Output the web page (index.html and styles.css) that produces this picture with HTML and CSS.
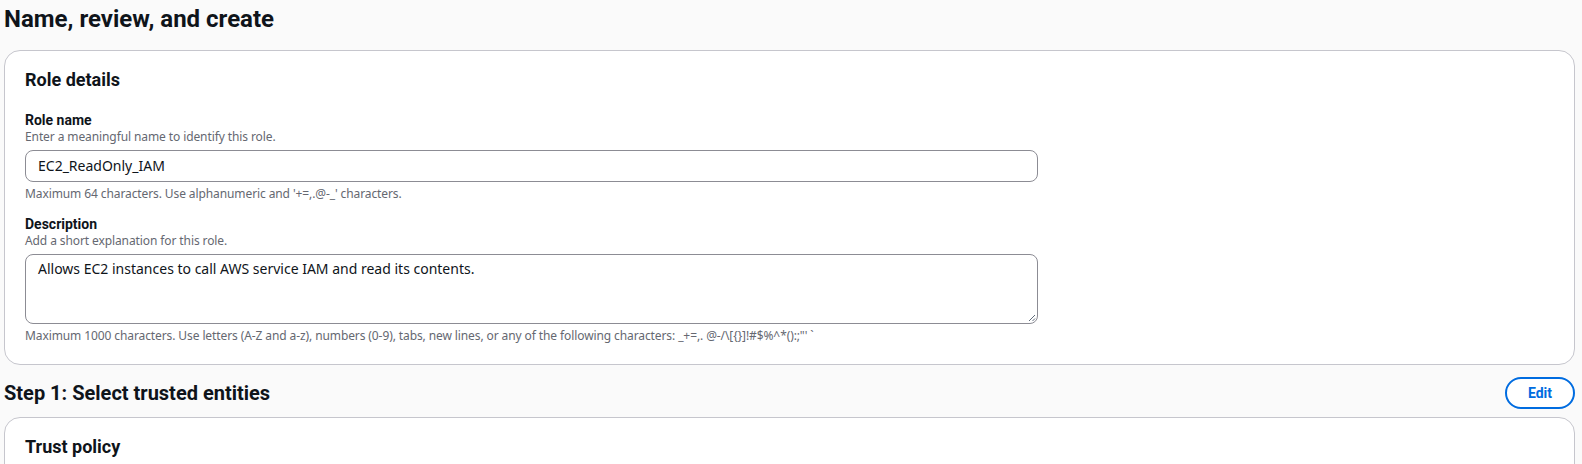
FILE: index.html
```html
<!DOCTYPE html>
<html>
<head>
<meta charset="utf-8">
<link rel="stylesheet" href="styles.css">
</head>
<body>
<div class="page">
  <h1 class="page-title">Name, review, and create</h1>
  <section class="card">
    <h2 class="card-title">Role details</h2>
    <div class="field">
      <div class="label">Role name</div>
      <div class="hint">Enter a meaningful name to identify this role.</div>
      <div class="input">EC2_ReadOnly_IAM</div>
      <div class="help">Maximum 64 characters. Use alphanumeric and '+=,.@-_' characters.</div>
    </div>
    <div class="field">
      <div class="label">Description</div>
      <div class="hint">Add a short explanation for this role.</div>
      <div class="textarea">Allows EC2 instances to call AWS service IAM and read its contents.
        <svg class="grip" width="8" height="8" viewBox="0 0 8 8"><path d="M1 7L7 1M4.5 7L7 4.5" stroke="#5f6b7a" stroke-width="1"/></svg>
      </div>
      <div class="help">Maximum 1000 characters. Use letters (A-Z and a-z), numbers (0-9), tabs, new lines, or any of the following characters: _+=,. @-/\[{}]!#$%^*():;"' `</div>
    </div>
  </section>
  <div class="step-head">
    <h2 class="step-title">Step 1: Select trusted entities</h2>
    <button class="edit-btn">Edit</button>
  </div>
  <section class="card card-open">
    <h2 class="card-title">Trust policy</h2>
  </section>
</div>
</body>
</html>
```

FILE: styles.css
```css
html, body {
  margin: 0;
  padding: 0;
  background: #fafafa;
}
body {
  font-family: "Noto Sans", "Open Sans", Arial, sans-serif;
  color: #0f141a;
}
.page {
  padding: 4px 7px 0 4px;
}
.page-title {
  margin: 0;
  font-family: Roboto, "Noto Sans", sans-serif;
  font-size: 24px;
  line-height: 30px;
  font-weight: 700;
  padding-bottom: 16px;
}
.card {
  background: #fff;
  border: 1px solid #c6c6cd;
  border-radius: 16px;
  padding: 18px 20px 20px;
}
.card-title {
  margin: 0;
  font-family: Roboto, "Noto Sans", sans-serif;
  font-size: 18px;
  line-height: 22px;
  font-weight: 700;
  padding-bottom: 20px;
}
.field + .field {
  margin-top: 13px;
}
.label {
  font-family: Roboto, "Noto Sans", sans-serif;
  font-size: 14px;
  line-height: 18px;
  font-weight: 700;
}
.hint {
  font-size: 12px;
  line-height: 16px;
  color: #656871;
  margin-bottom: 5px;
  letter-spacing: -0.1px;
}
.input, .textarea {
  width: 1013px;
  box-sizing: border-box;
  border: 1px solid #8c8c94;
  border-radius: 8px;
  background: #fff;
  padding: 0 12px;
  font-size: 14px;
  color: #0f141a;
}
.input {
  height: 32px;
  line-height: 30px;
}
.textarea {
  position: relative;
  height: 70px;
  padding-top: 4px;
  line-height: 20px;
}
.grip {
  position: absolute;
  right: 1px;
  bottom: 1px;
}
.help {
  font-size: 12px;
  line-height: 16px;
  color: #656871;
  margin-top: 4px;
  letter-spacing: -0.1px;
}
.step-head {
  display: flex;
  justify-content: space-between;
  align-items: center;
  padding: 12px 0 8px;
}
.step-title {
  margin: 0;
  font-family: Roboto, "Noto Sans", sans-serif;
  font-size: 20px;
  line-height: 26px;
  font-weight: 700;
}
.edit-btn {
  width: 70px;
  height: 32px;
  border: 2px solid #006ce0;
  border-radius: 20px;
  background: #fff;
  color: #006ce0;
  font-family: Roboto, "Noto Sans", sans-serif;
  font-size: 14px;
  font-weight: 700;
  padding: 0;
}
.card-open {
  padding-bottom: 40px;
}
```
